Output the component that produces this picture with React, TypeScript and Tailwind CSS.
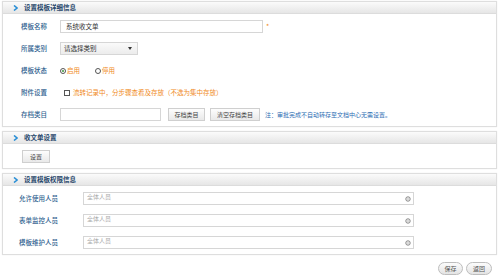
import React from "react";

const font = { fontFamily: '"Noto Sans CJK SC", "Noto Sans", sans-serif' };

function Chevron() {
  return (
    <svg width="5" height="6" viewBox="0 0 5 6" className="shrink-0">
      <path d="M1 0.5 L4 3 L1 5.5" fill="none" stroke="#2a8fd6" strokeWidth="1.6" />
    </svg>
  );
}

function Header({ title }: { title: string }) {
  return (
    <div className="h-[12px] flex items-center gap-[6px] pl-[10px] bg-gradient-to-b from-[#fbfbfb] to-[#e6e6e6] border-b border-[#dcdcdc]">
      <Chevron />
      <span className="text-[6.5px] font-bold text-[#27476b] leading-none">{title}</span>
    </div>
  );
}

function Panel({ title, children, className }: { title: string; children: React.ReactNode; className?: string }) {
  return (
    <div className={"border border-[#dedede] bg-white shadow-[0_0_1px_#e8e8e8] " + (className ?? "")}>
      <Header title={title} />
      {children}
    </div>
  );
}

function Btn({ children, className }: { children: React.ReactNode; className?: string }) {
  return (
    <div
      className={
        "h-[13px] flex items-center justify-center border border-[#cfcfcf] bg-gradient-to-b from-[#fdfdfd] to-[#e9e9e9] text-[6px] text-[#444] leading-none " +
        (className ?? "")
      }
    >
      {children}
    </div>
  );
}

function GearIcon() {
  return (
    <svg width="6" height="6" viewBox="0 0 6 6">
      <circle cx="3" cy="3" r="2.2" fill="none" stroke="#777" strokeWidth="0.9" />
      <circle cx="3" cy="3" r="0.8" fill="#aaa" />
    </svg>
  );
}

const label = "text-[6.5px] font-medium text-[#2f5f8f] leading-none";

export default function App() {
  return (
    <div className="w-[500px] h-[276px] bg-white pt-[1px] pl-[2px] pr-[3px] flex flex-col" style={font}>
      <Panel title="设置模板详细信息">
        <div className="flex flex-col gap-[9px] pt-[6px] pb-[5px]">
          <div className="h-[13px] flex items-center">
            <span className={"w-[57px] pl-[18px] " + label}>模板名称</span>
            <div className="w-[203px] h-[13px] border border-[#d6d6d6] flex items-center pl-[5px] text-[6.5px] text-[#333] leading-none">系统收文单</div>
            <span className="ml-[3px] text-[7px] text-[#f08a24] leading-none">*</span>
          </div>
          <div className="h-[13px] flex items-center">
            <span className={"w-[57px] pl-[18px] " + label}>所属类别</span>
            <div className="w-[78px] h-[13px] border border-[#d6d6d6] bg-gradient-to-b from-[#fafafa] to-[#ececec] flex items-center justify-between pl-[3px] pr-[5px] text-[6.5px] text-[#333] leading-none">
              <span>请选择类别</span>
              <svg width="4" height="3" viewBox="0 0 4 3"><path d="M0 0 L4 0 L2 3 Z" fill="#333" /></svg>
            </div>
          </div>
          <div className="h-[13px] flex items-center">
            <span className={"w-[57px] pl-[18px] " + label}>模板状态</span>
            <div className="flex items-center gap-[1px] w-[35px]">
              <span className="w-[6px] h-[6px] rounded-full border border-[#555] flex items-center justify-center">
                <span className="w-[2px] h-[2px] rounded-full bg-[#3a9a3a]" />
              </span>
              <span className="text-[6.5px] text-[#f08a24] leading-none">启用</span>
            </div>
            <div className="flex items-center gap-[1px]">
              <span className="w-[6px] h-[6px] rounded-full border border-[#555]" />
              <span className="text-[6.5px] text-[#f08a24] leading-none">停用</span>
            </div>
          </div>
          <div className="h-[13px] flex items-center">
            <span className={"w-[57px] pl-[18px] " + label}>附件设置</span>
            <span className="ml-[4px] w-[6px] h-[6px] border border-[#555] bg-white" />
            <span className="ml-[3px] text-[6.5px] text-[#f08a24] leading-none">流转记录中，分步骤查看及存放（不选为集中存放）</span>
          </div>
          <div className="h-[13px] flex items-center">
            <span className={"w-[57px] pl-[18px] " + label}>存档类目</span>
            <div className="w-[101px] h-[13px] border border-[#d6d6d6]" />
            <Btn className="ml-[7px] w-[37px]">存档类目</Btn>
            <Btn className="ml-[5px] w-[50px]">清空存档类目</Btn>
            <span className="ml-[5px] text-[6px] text-[#2c6db3] leading-none">注：审批完成不自动转存至文档中心无需设置。</span>
          </div>
        </div>
      </Panel>

      <Panel title="收文单设置" className="mt-[4px]">
        <div className="pt-[6px] pb-[5px] pl-[19px]">
          <Btn className="w-[28px]">设置</Btn>
        </div>
      </Panel>

      <Panel title="设置模板权限信息" className="mt-[4px]">
        <div className="flex flex-col gap-[9px] pt-[6px] pb-[5px]">
          {["允许使用人员", "表单监控人员", "模板维护人员"].map((l) => (
            <div key={l} className="h-[13px] flex items-center">
              <span className={"w-[80px] pl-[16px] " + label}>{l}</span>
              <div className="w-[331px] h-[13px] border border-[#d6d6d6] flex items-start justify-between pl-[3px] pr-[2px] pt-[1px]">
                <span className="text-[6px] text-[#aaa] leading-none">全体人员</span>
                <span className="self-center"><GearIcon /></span>
              </div>
            </div>
          ))}
        </div>
      </Panel>

      <div className="flex justify-end gap-[3px] mt-[7px] pr-[5px]">
        <div className="w-[25px] h-[13px] rounded-full border border-[#bdbdbd] bg-gradient-to-b from-[#fcfcfc] to-[#e4e4e4] flex items-center justify-center text-[6px] text-[#555] leading-none">保存</div>
        <div className="w-[26px] h-[13px] rounded-full border border-[#bdbdbd] bg-gradient-to-b from-[#fcfcfc] to-[#e4e4e4] flex items-center justify-center text-[6px] text-[#555] leading-none">返回</div>
      </div>
    </div>
  );
}
